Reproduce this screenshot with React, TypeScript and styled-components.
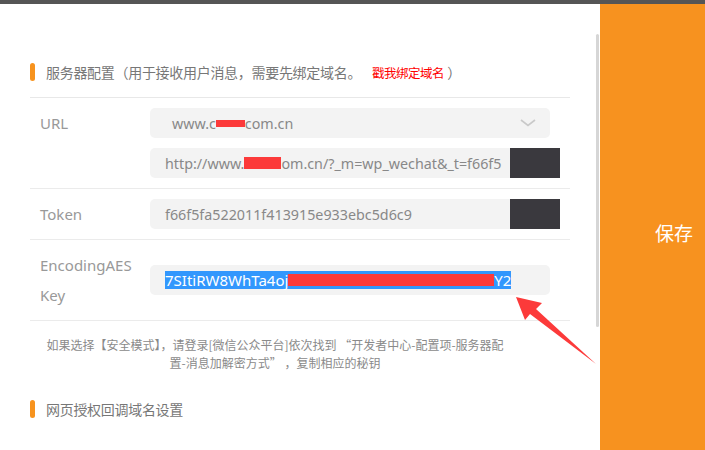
import React from "react";
import styled, { createGlobalStyle } from "styled-components";

const Global = createGlobalStyle`
  html, body { margin: 0; padding: 0; background: #fff; overflow: hidden; }
  body { font-family: "Noto Sans", "Noto Sans CJK SC", sans-serif; }
`;

const Page = styled.div`
  position: relative;
  width: 705px;
  height: 450px;
  display: flex;
  flex-direction: column;
  overflow: hidden;
`;

const TopBar = styled.div`
  height: 4px;
  flex-shrink: 0;
  background: #555;
`;

const Body = styled.div`
  flex: 1;
  display: flex;
`;

const Main = styled.div`
  width: 600px;
  display: flex;
  background: #fff;
`;

const Content = styled.div`
  width: 540px;
  padding: 58px 0 0 30px;
  display: flex;
  flex-direction: column;
`;

const ScrollThumb = styled.div`
  margin: 30px 0 0 26px;
  width: 3px;
  height: 293px;
  background: #d6d6d6;
  border-radius: 2px;
`;

const SideBar = styled.div`
  flex: 1;
  background: #f7921f;
  display: flex;
  align-items: flex-start;
  padding: 216px 0 0 55px;
`;

const SaveText = styled.span`
  color: #fff;
  font-size: 19px;
  line-height: 26px;
  font-family: "Noto Sans CJK SC", sans-serif;
`;

const SectionHead = styled.div<{ $divider?: boolean }>`
  display: flex;
  align-items: center;
  gap: 11px;
  height: 20px;
  font-size: 14px;
  letter-spacing: -0.3px;
  color: #777;
  font-family: "Noto Sans CJK SC", sans-serif;
  ${(p) => (p.$divider ? "padding-bottom: 15px; border-bottom: 1px solid #e8e8e8;" : "")}
`;

const HeadBar = styled.span`
  width: 5px;
  height: 18px;
  border-radius: 3px;
  background: #f7931e;
`;

const RedLink = styled.span`
  color: #ff0000;
  font-size: 12.5px;
  letter-spacing: -0.5px;
  margin-left: 11px;
`;

const Paren = styled.span`
  margin-left: 3px;
`;

const Row = styled.div<{ $align?: string }>`
  display: flex;
  align-items: ${(p) => p.$align || "center"};
  padding: 10px 0;
  border-bottom: 1px solid #ebebeb;
`;

const Label = styled.div`
  width: 110px;
  padding-left: 10px;
  font-size: 15px;
  line-height: 30px;
  color: #999;
`;

const Fields = styled.div`
  width: 400px;
  display: flex;
  flex-direction: column;
  gap: 10px;
`;

const Box = styled.div<{ $pad?: number }>`
  position: relative;
  height: 30px;
  display: flex;
  align-items: center;
  justify-content: space-between;
  padding: 0 14px 0 ${(p) => p.$pad ?? 15}px;
  background: #f3f3f3;
  border-radius: 5px;
  font-size: 14.3px;
  color: #888;
  white-space: nowrap;
`;

const Value = styled.span`
  display: inline-flex;
  align-items: center;
`;

const Mask = styled.span<{ $w: number; $h: number }>`
  display: inline-block;
  width: ${(p) => p.$w}px;
  height: ${(p) => p.$h}px;
  background: #fc3a3a;
`;

const DarkMask = styled.div`
  position: absolute;
  top: 0;
  right: -10px;
  width: 50px;
  height: 30px;
  background: #3a393e;
`;

const Selected = styled.span`
  display: inline-flex;
  align-items: center;
  background: #3297fd;
  color: #fff;
  font-size: 15px;
  line-height: 18px;
  height: 18px;
`;

const Help = styled.div`
  padding: 15px 50px 0 0;
  text-align: center;
  font-size: 12px;
  line-height: 18px;
  color: #8a8a8a;
  font-family: "Noto Sans CJK SC", sans-serif;
`;

const Spacer = styled.div`
  height: 27px;
`;

const Overlay = styled.svg`
  position: absolute;
  left: 0;
  top: 0;
  pointer-events: none;
`;

export default function App() {
  return (
    <Page>
      <Global />
      <TopBar />
      <Body>
        <Main>
          <Content>
            <SectionHead $divider>
              <HeadBar />
              <span>
                服务器配置（用于接收用户消息，需要先绑定域名。
                <RedLink>戳我绑定域名</RedLink>
                <Paren>）</Paren>
              </span>
            </SectionHead>

            <Row $align="flex-start">
              <Label>URL</Label>
              <Fields>
                <Box $pad={22}>
                  <Value>
                    www.c<Mask $w={29} $h={7} />com.cn
                  </Value>
                  <svg width="16" height="8" viewBox="0 0 16 8">
                    <polyline points="1,1 8,6.5 15,1" fill="none" stroke="#c9c9c9" strokeWidth="1.6" />
                  </svg>
                </Box>
                <Box>
                  <Value>
                    http://www.<Mask $w={37} $h={12} />om.cn/?_m=wp_wechat&amp;_t=f66f5
                  </Value>
                  <DarkMask />
                </Box>
              </Fields>
            </Row>

            <Row>
              <Label>Token</Label>
              <Fields>
                <Box>
                  <Value>f66f5fa522011f413915e933ebc5d6c9</Value>
                  <DarkMask />
                </Box>
              </Fields>
            </Row>

            <Row>
              <Label>
                EncodingAES
                <br />
                Key
              </Label>
              <Fields>
                <Box>
                  <Selected>
                    7SItiRW8WhTa4oj<Mask $w={206} $h={12} />Y2
                  </Selected>
                </Box>
              </Fields>
            </Row>

            <Help>
              如果选择【安全模式】，请登录[微信公众平台]依次找到 “开发者中心-配置项-服务器配
              <br />
              置-消息加解密方式” ，复制相应的秘钥
            </Help>

            <Spacer />

            <SectionHead>
              <HeadBar />
              <span>网页授权回调域名设置</span>
            </SectionHead>
          </Content>
          <ScrollThumb />
        </Main>
        <SideBar>
          <SaveText>保存</SaveText>
        </SideBar>
      </Body>
      <Overlay width="705" height="450" viewBox="0 0 705 450">
        <polygon
          points="516,297 542,303 536,309 596,364 530,314 525,320"
          fill="#fc3a3a"
        />
      </Overlay>
    </Page>
  );
}
